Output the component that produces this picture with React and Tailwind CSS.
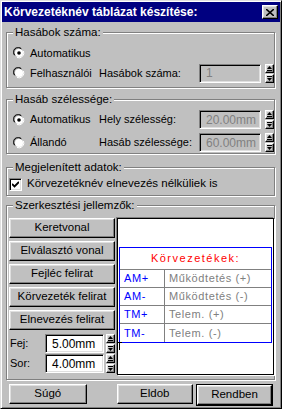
const raised =
  "border border-t-white border-l-white border-r-black border-b-black shadow-[inset_-1px_-1px_0_#808080,inset_1px_1px_0_#dfdfdf]";
const sunken =
  "border border-t-[#808080] border-l-[#808080] border-r-white border-b-white shadow-[inset_1px_1px_0_#000,inset_-1px_-1px_0_#dfdfdf]";

function Radio({ checked }) {
  return (
    <svg width="12" height="12" viewBox="0 0 12 12" className="shrink-0">
      <path d="M1 8 A5 5 0 0 1 8 1" fill="none" stroke="#808080" />
      <path d="M2 8.5 A4 4 0 0 1 8.5 2" fill="none" stroke="#000" />
      <circle cx="6" cy="6" r="4" fill="#fff" />
      <path d="M10.5 4 A5 5 0 0 1 4 10.5" fill="none" stroke="#fff" />
      {checked && <circle cx="6" cy="6" r="1.8" fill="#000" />}
    </svg>
  );
}

function Spin() {
  return (
    <div className="flex flex-col w-[9px] h-[19px] gap-px">
      {[0, 1].map((i) => (
        <div key={i} className={`flex-1 bg-[#c0c0c0] ${raised} flex items-center justify-center`}>
          <svg width="5" height="5" viewBox="0 0 5 5">
            {i === 0 ? (
              <>
                <path d="M2.5 0 L5 3 L0 3 Z" fill="#000" />
                <rect x="0" y="4" width="5" height="1" fill="#000" />
              </>
            ) : (
              <>
                <rect x="0" y="0" width="5" height="1" fill="#000" />
                <path d="M0 2 L5 2 L2.5 5 Z" fill="#000" />
              </>
            )}
          </svg>
        </div>
      ))}
    </div>
  );
}

function Field({ value, disabled, w = "w-[62px]" }) {
  return (
    <div
      className={`${w} h-[19px] ${sunken} ${
        disabled ? "bg-[#c0c0c0] text-[#808080]" : "bg-white text-black"
      } flex items-center pl-[6px] text-[12px] leading-none`}
    >
      {value}
    </div>
  );
}

function Group({ label, className = "", children }) {
  return (
    <fieldset
      className={`ml-[5px] mr-[6px] border border-[#808080] shadow-[1px_1px_0_#fff,inset_1px_1px_0_#fff] ${className}`}
    >
      <legend className="ml-[6px] px-[2px] bg-[#c0c0c0] text-[11.5px] leading-[13px]">{label}</legend>
      {children}
    </fieldset>
  );
}

function Btn({ children, className = "" }) {
  return (
    <div className={`h-[20px] bg-[#c0c0c0] ${raised} flex items-center justify-center text-[11.5px] leading-none ${className}`}>
      {children}
    </div>
  );
}

const ROWS = [
  ["AM+", "Működtetés (+)"],
  ["AM-", "Működtetés (-)"],
  ["TM+", "Telem. (+)"],
  ["TM-", "Telem. (-)"],
];

export default function App() {
  return (
    <div
      className="w-[282px] h-[409px] bg-[#c0c0c0] text-black text-[11px] border border-t-[#dfdfdf] border-l-[#dfdfdf] border-r-black border-b-black shadow-[inset_1px_1px_0_#fff,inset_-1px_-1px_0_#808080] flex flex-col"
      style={{ fontFamily: '"Liberation Sans", Arial, sans-serif' }}
    >
      {/* Title bar */}
      <div className="h-[20px] mx-[1px] mt-[1px] bg-[#000080] flex items-center justify-between pl-[2px] pr-[2px]">
        <span className="text-white font-bold text-[12px]">Körvezetéknév táblázat készítése:</span>
        <div className={`w-[16px] h-[14px] bg-[#c0c0c0] ${raised} flex items-center justify-center`}>
          <svg width="8" height="7" viewBox="0 0 8 7">
            <path d="M0 0 L8 7 M8 0 L0 7" stroke="#000" strokeWidth="1.6" />
          </svg>
        </div>
      </div>

      <Group label="Hasábok száma:" className="mt-[4px] h-[62px] pt-[4px]">
        <div className="flex items-center pl-[6px] h-[20px]">
          <Radio checked />
          <span className="ml-[5px]">Automatikus</span>
        </div>
        <div className="flex items-center pl-[6px] h-[20px]">
          <Radio />
          <span className="ml-[5px] w-[69px]">Felhasználói</span>
          <span className="w-[100px]">Hasábok száma:</span>
          <Field value="1" disabled />
          <div className="ml-[4px]"><Spin /></div>
        </div>
      </Group>

      <Group label="Hasáb szélessége:" className="mt-[5px] h-[61px] pt-[2px]">
        <div className="flex items-center pl-[6px] h-[23px]">
          <Radio checked />
          <span className="ml-[5px] w-[69px]">Automatikus</span>
          <span className="w-[100px]">Hely szélesség:</span>
          <Field value="20.00mm" disabled />
          <div className="ml-[4px]"><Spin /></div>
        </div>
        <div className="flex items-center pl-[6px] h-[23px]">
          <Radio />
          <span className="ml-[5px] w-[69px]">Állandó</span>
          <span className="w-[100px]">Hasáb szélessége:</span>
          <Field value="60.00mm" disabled />
          <div className="ml-[4px]"><Spin /></div>
        </div>
      </Group>

      <Group label="Megjelenített adatok:" className="mt-[7px] h-[35px] pt-[2px]">
        <div className="flex items-center gap-[5px] pl-[2px] h-[16px] text-[11.5px]">
          <div className={`w-[13px] h-[13px] bg-white ${sunken} flex items-center justify-center`}>
            <svg width="7" height="7" viewBox="0 0 7 7">
              <path d="M0 3 L2.5 5.5 L7 1" fill="none" stroke="#000" strokeWidth="1.8" />
            </svg>
          </div>
          <span>Körvezetéknév elnevezés nélküliek is</span>
        </div>
      </Group>

      <Group label="Szerkesztési jellemzők:" className="mt-[3px] h-[181px] pt-[6px]">
        <div className="flex pl-[2px] gap-[2px]">
          <div className="w-[106px] flex flex-col gap-[3px]">
            <Btn>Keretvonal</Btn>
            <Btn>Elválasztó vonal</Btn>
            <Btn>Fejléc felirat</Btn>
            <Btn>Körvezeték felirat</Btn>
            <Btn>Elnevezés felirat</Btn>
            <div className="flex items-center mt-[1px]">
              <span className="w-[36px] pl-[1px]">Fej:</span>
              <Field value="5.00mm" w="w-[59px]" />
              <div className="ml-[2px]"><Spin /></div>
            </div>
            <div className="flex items-center -mt-[2px]">
              <span className="w-[36px] pl-[1px]">Sor:</span>
              <Field value="4.00mm" w="w-[59px]" />
              <div className="ml-[2px]"><Spin /></div>
            </div>
          </div>
          <div className="w-[157px] h-[157px] bg-white border border-black shadow-[-1px_-1px_0_#808080,1px_1px_0_#fff] pt-[28px] px-[1px]">
            <div className="border border-[#0000ff] text-[11px] tracking-[0.6px]">
              <div className="h-[22px] flex items-center justify-center text-[#ff0000] tracking-[1.5px] border-b border-[#808080]">
                Körvezetékek:
              </div>
              {ROWS.map(([a, b], i) => (
                <div key={a} className={`h-[18px] flex ${i < 3 ? "border-b border-[#808080]" : ""}`}>
                  <div className="w-[45px] pl-[4px] flex items-center text-[#0000ff] border-r border-[#808080]">{a}</div>
                  <div className="pl-[4px] flex items-center text-[#808080]">{b}</div>
                </div>
              ))}
            </div>
            <svg width="5" height="8" viewBox="0 0 5 8" className="-ml-[2px] -mt-[1px]">
              <path d="M0 0.5 H5 M2.5 0 V8" stroke="#000" strokeWidth="1" />
            </svg>
          </div>
        </div>
      </Group>

      <div className="flex mt-[4px] px-[8px]">
        <Btn className="w-[78px]">Súgó</Btn>
        <Btn className="w-[77px] ml-[30px]">Eldob</Btn>
        <div className="ml-[3px] border border-black">
          <Btn className="w-[75px] h-[18px]">Rendben</Btn>
        </div>
      </div>
    </div>
  );
}
